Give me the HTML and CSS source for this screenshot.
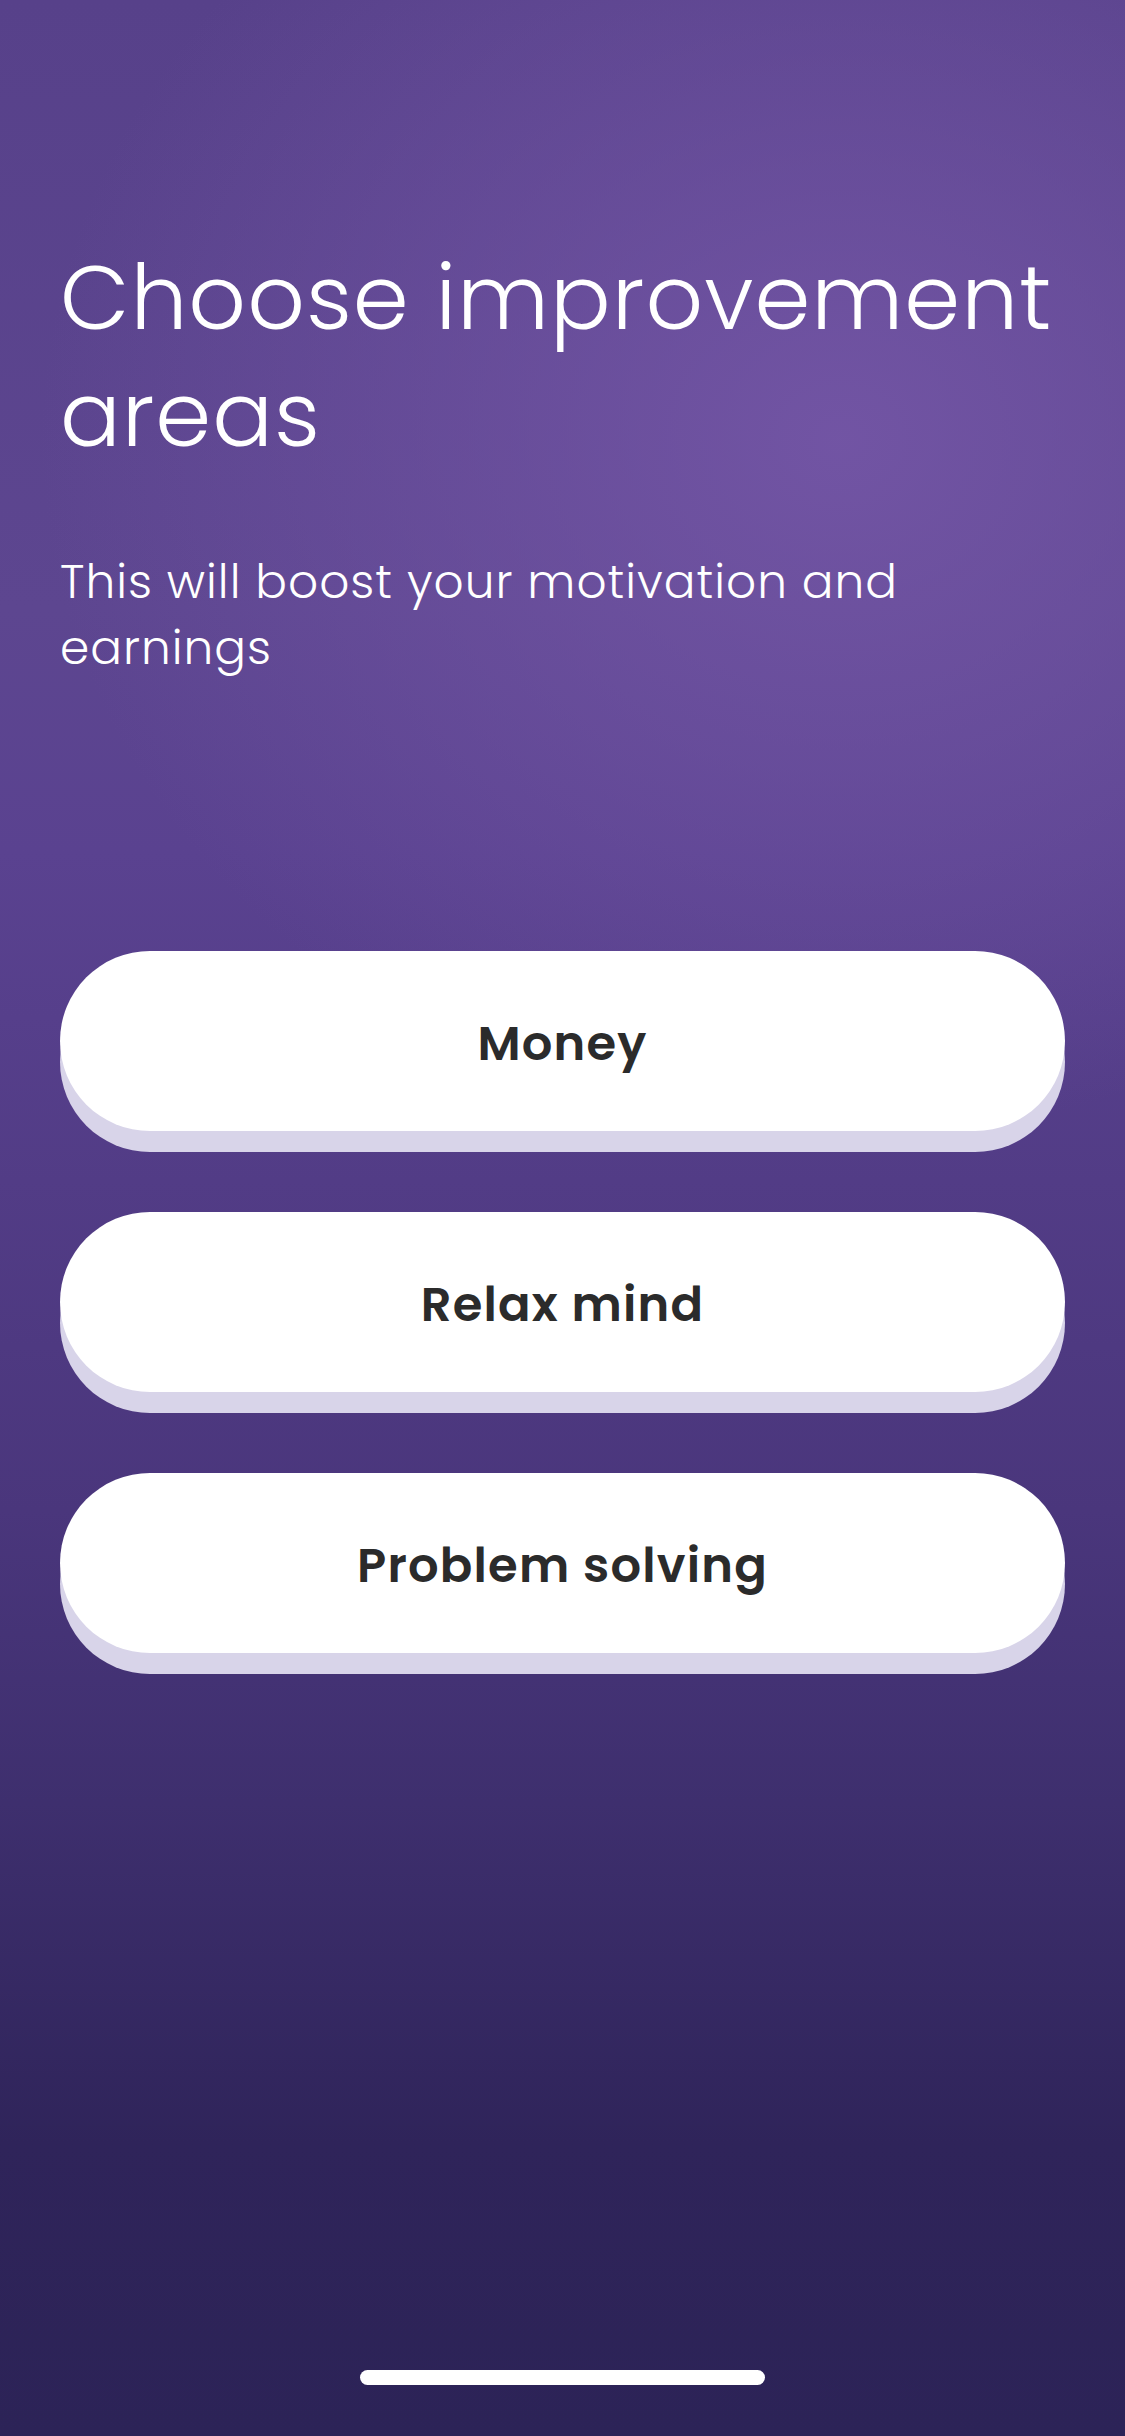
FILE: index.html
```html
<!DOCTYPE html>
<html lang="en">
<head>
<meta charset="utf-8">
<title>Choose improvement areas</title>
<link rel="stylesheet" href="styles.css">
</head>
<body>
<main class="screen">
  <h1 class="title">Choose improvement areas</h1>
  <p class="subtitle">This will boost your motivation and earnings</p>
  <div class="options">
    <button class="option">Money</button>
    <button class="option">Relax mind</button>
    <button class="option">Problem solving</button>
  </div>
  <div class="home-indicator"></div>
</main>
</body>
</html>
```
FILE: styles.css
```css
html, body {
  margin: 0;
  padding: 0;
}
body {
  width: 1125px;
  min-height: 2436px;
  background: #2c2357;
  font-family: "Poppins", "Inter", "Noto Sans", sans-serif;
}
.screen {
  box-sizing: border-box;
  min-height: 2436px;
  display: flex;
  flex-direction: column;
  padding: 239px 60px 51px 60px;
  background:
    radial-gradient(ellipse 800px 700px at 840px 440px, rgba(116, 86, 166, 0.9) 0%, rgba(116, 86, 166, 0) 100%),
    linear-gradient(180deg, #57418a 0%, #5d4690 25%, #5a4290 35%, #4a367c 62%, #3e2f6e 74%, #2f245a 88%, #2c2357 100%);
}
.title {
  margin: 0 -20px 0 0;
  color: #ffffff;
  font-size: 90px;
  line-height: 117px;
  font-weight: 300;
  letter-spacing: 1px;
}
.subtitle {
  margin: 76px 0 0;
  color: #ffffff;
  font-size: 47px;
  line-height: 66px;
  font-weight: 300;
  letter-spacing: 1px;
  max-width: 920px;
}
.options {
  margin-top: 270px;
  display: flex;
  flex-direction: column;
  gap: 81px;
}
.option {
  height: 180px;
  border: 0;
  border-radius: 90px;
  background: #ffffff;
  box-shadow: 0 21px 0 #d8d4e9;
  color: #2b2b2b;
  font-family: inherit;
  font-size: 48px;
  font-weight: 600;
  letter-spacing: 1.2px;
  padding: 5px 0 0;
  cursor: pointer;
}
.home-indicator {
  margin-top: auto;
  align-self: center;
  width: 405px;
  height: 15px;
  border-radius: 8px;
  background: #ffffff;
}
```
